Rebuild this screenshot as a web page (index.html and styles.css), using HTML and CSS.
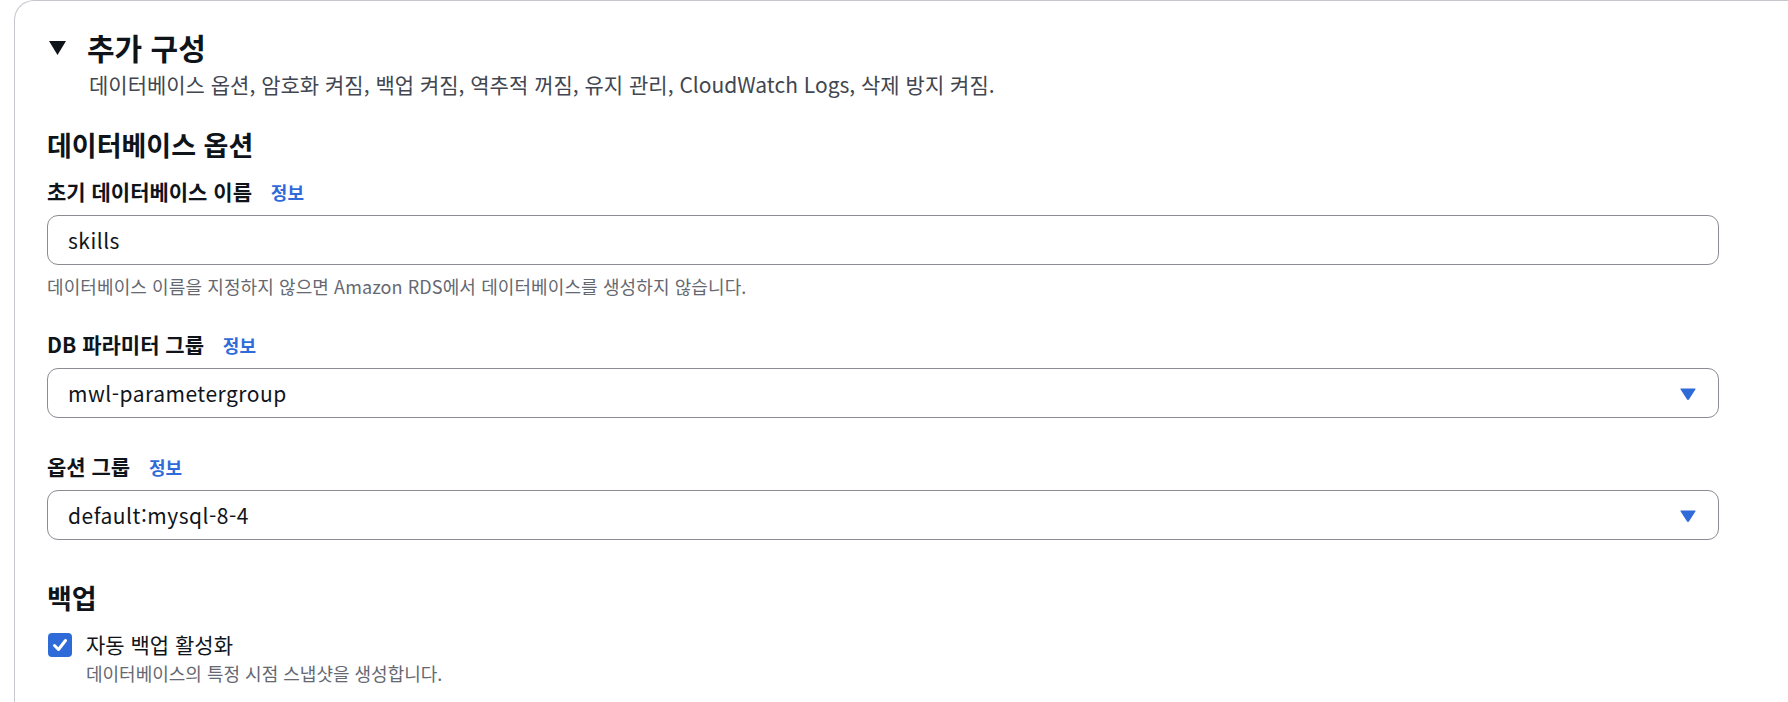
FILE: index.html
```html
<!DOCTYPE html>
<html lang="ko">
<head>
<meta charset="utf-8">
<title>추가 구성</title>
<link rel="stylesheet" href="styles.css">
</head>
<body>
<section class="panel">
  <div class="panel-header">
    <svg class="caret" width="17" height="14" viewBox="0 0 17 14"><path d="M0 0 H17 L8.5 14 Z" fill="#0f141a"/></svg>
    <h2 class="panel-title">추가 구성</h2>
  </div>
  <p class="panel-desc">데이터베이스 옵션, 암호화 켜짐, 백업 켜짐, 역추적 꺼짐, 유지 관리, CloudWatch Logs, 삭제 방지 켜짐.</p>

  <div class="form">
    <h3 class="section-title">데이터베이스 옵션</h3>

    <div class="field field-first">
      <div class="label">초기 데이터베이스 이름 <a class="info">정보</a></div>
      <div class="control"><span class="value">skills</span></div>
      <div class="hint">데이터베이스 이름을 지정하지 않으면 Amazon RDS에서 데이터베이스를 생성하지 않습니다.</div>
    </div>

    <div class="field field-second">
      <div class="label">DB 파라미터 그룹 <a class="info">정보</a></div>
      <div class="control select"><span class="value">mwl-parametergroup</span>
        <svg class="arrow" width="16" height="12" viewBox="0 0 16 12"><path d="M1 1 H15 L8.6 11 Q8 11.8 7.4 11 Z" fill="#2f6bd8" stroke="#2f6bd8" stroke-width="1.2" stroke-linejoin="round"/></svg>
      </div>
    </div>

    <div class="field field-third">
      <div class="label">옵션 그룹 <a class="info">정보</a></div>
      <div class="control select"><span class="value">default:mysql-8-4</span>
        <svg class="arrow" width="16" height="12" viewBox="0 0 16 12"><path d="M1 1 H15 L8.6 11 Q8 11.8 7.4 11 Z" fill="#2f6bd8" stroke="#2f6bd8" stroke-width="1.2" stroke-linejoin="round"/></svg>
      </div>
    </div>

    <h3 class="section-title backup">백업</h3>
    <div class="check-row">
      <span class="checkbox"><svg width="24" height="24" viewBox="0 0 24 24"><path d="M6.5 12.5 L10.5 16.5 L17.5 7.5" fill="none" stroke="#ffffff" stroke-width="3" stroke-linecap="round" stroke-linejoin="round"/></svg></span>
      <div class="check-text">
        <div class="check-label">자동 백업 활성화</div>
        <div class="check-desc">데이터베이스의 특정 시점 스냅샷을 생성합니다.</div>
      </div>
    </div>
  </div>
</section>
</body>
</html>
```

FILE: styles.css
```css
html, body {
  margin: 0;
  padding: 0;
  background: #ffffff;
  overflow: hidden;
}
body {
  font-family: "Noto Sans CJK KR", "Noto Sans", sans-serif;
  color: #0f141a;
  width: 1788px;
  height: 702px;
}
.panel {
  margin-left: 14px;
  width: 1800px;
  height: 702px;
  border: 1px solid #c6c6cd;
  border-right: none;
  border-bottom: none;
  border-radius: 20px 0 0 0;
  padding: 26px 0 0 32px;
  box-sizing: border-box;
  overflow: hidden;
}
.panel-header {
  display: flex;
  align-items: center;
  height: 40px;
}
.caret {
  margin-left: 2px;
  margin-right: 21px;
  margin-top: 1px;
}
.panel-title {
  margin: 0;
  font-size: 30px;
  font-weight: 700;
  line-height: 40px;
}
.panel-desc {
  margin: 3px 0 0 42px;
  font-size: 21px;
  line-height: 28px;
  color: #424650;
}
.form {
  width: 1672px;
}
.section-title {
  margin: 30px 0 0 0;
  font-size: 27px;
  font-weight: 700;
  line-height: 34px;
}
.section-title.backup {
  margin-top: 41px;
}
.field-first { margin-top: 15px; }
.field-second { margin-top: 32px; }
.field-third { margin-top: 34px; }
.label {
  font-size: 21px;
  font-weight: 700;
  line-height: 28px;
}
.info {
  margin-left: 13px;
  font-size: 18px;
  font-weight: 700;
  color: #2f6bd8;
}
.control {
  margin-top: 9px;
  height: 50px;
  box-sizing: border-box;
  border: 1px solid #8c8c94;
  border-radius: 11px;
  display: flex;
  align-items: center;
  padding: 0 22px 0 20px;
}
.value {
  flex: 1;
  font-size: 21px;
  letter-spacing: 0.5px;
  color: #0f141a;
}
.arrow {
  display: block;
  margin-top: 1px;
}
.hint {
  margin-top: 9px;
  font-size: 18px;
  line-height: 24px;
  letter-spacing: 0.1px;
  color: #656871;
}
.check-row {
  display: flex;
  margin-top: 15px;
  gap: 14px;
}
.checkbox {
  width: 24px;
  height: 24px;
  margin-top: 3px;
  margin-left: 1px;
  border-radius: 4px;
  background: #2f6bd8;
  flex: none;
}
.checkbox svg { display: block; }
.check-label {
  font-size: 21px;
  line-height: 28px;
}
.check-desc {
  margin-top: 3px;
  font-size: 18px;
  line-height: 24px;
  color: #656871;
}
```
